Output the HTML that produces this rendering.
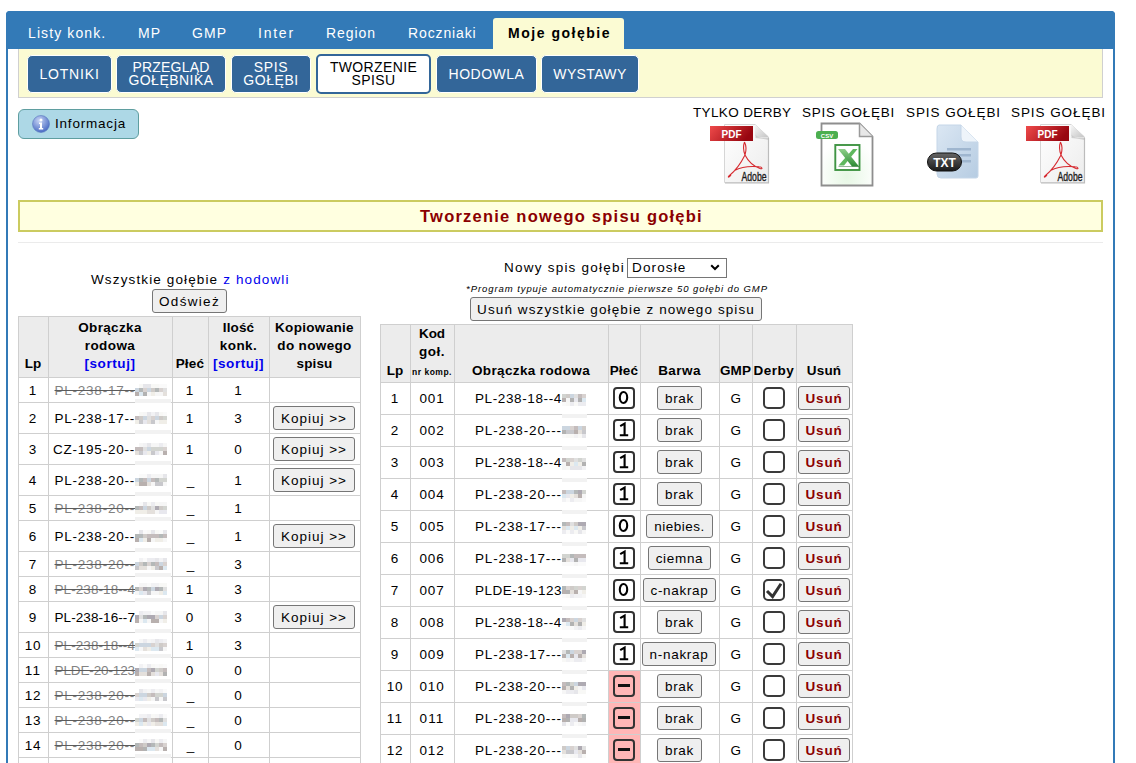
<!DOCTYPE html>
<html><head><meta charset="utf-8"><style>
*{box-sizing:border-box}
html,body{margin:0;padding:0}
body{width:1136px;height:763px;overflow:hidden;position:relative;background:#fff;font-family:"Liberation Sans",sans-serif;font-size:13px;color:#000}
.a{position:absolute}
.t{position:absolute;white-space:nowrap;line-height:16px}
.b{font-weight:bold}
#frame{position:absolute;left:6px;top:11px;width:1109px;height:800px;border:2px solid #337ab7;border-radius:4px 4px 0 0}
#hdr{position:absolute;left:6px;top:11px;width:1109px;height:38px;background:#337ab7;border-radius:4px 4px 0 0}
#acttab{position:absolute;left:493px;top:18px;width:131px;height:32px;background:#fbfbd3;border-radius:3px 3px 0 0}
#ybar{position:absolute;left:18px;top:49px;width:1085px;height:49px;background:#fbfbd3;border:1px solid #d0d0d0;border-top:0}
.nb{position:absolute;top:55px;height:38px;background:#336699;border:1px solid #fff;border-radius:5px}
.nb.act{top:54px;height:40px;background:#fff;border:2px solid #336699}
#info{position:absolute;left:18px;top:109px;width:121px;height:30px;background:#add8e6;border:1px solid #5f9ea0;border-radius:6px}
#title{position:absolute;left:18px;top:200px;width:1085px;height:32px;background:#ffffe0;border:2px solid #cbcb60}
#hr{position:absolute;left:18px;top:242px;width:1085px;height:1px;background:#ebebeb}
.hl{position:absolute;background:#cfcfcf}
.hbg{position:absolute;background:#ececec}
.btn{position:absolute;background:#efefef;border:1px solid #767676;border-radius:3px}
.lnk{color:#0000ee}
.strk{color:#828282;text-decoration:line-through;text-decoration-color:#5c5c5c}
.sq{position:absolute;border:2px solid #333;border-radius:5px}
.m{position:absolute;width:4px;height:4px}
</style></head><body>
<div id="frame"></div><div id="hdr"></div>
<div class="t " style="top: 24.65px; font-size: 14px; line-height: 17px; left: 28px; color: rgb(255, 255, 255); letter-spacing: 1.1px;">Listy konk.</div>
<div class="t " style="top: 24.65px; font-size: 14px; line-height: 17px; left: 138px; color: rgb(255, 255, 255); letter-spacing: 1.2px;">MP</div>
<div class="t " style="top: 24.65px; font-size: 14px; line-height: 17px; left: 192px; color: rgb(255, 255, 255); letter-spacing: 1.04px;">GMP</div>
<div class="t " style="top: 24.65px; font-size: 14px; line-height: 17px; left: 258px; color: rgb(255, 255, 255); letter-spacing: 1.76px;">Inter</div>
<div class="t " style="top: 24.65px; font-size: 14px; line-height: 17px; left: 326px; color: rgb(255, 255, 255); letter-spacing: 0.94px;">Region</div>
<div class="t " style="top: 24.65px; font-size: 14px; line-height: 17px; left: 408px; color: rgb(255, 255, 255); letter-spacing: 0.87px;">Roczniaki</div>
<div id="acttab"></div>
<div class="t b" style="top: 24.65px; font-size: 14px; line-height: 17px; left: 508px; letter-spacing: 1.52px;">Moje gołębie</div>
<div id="ybar"></div>
<div class="nb" style="left:27px;width:85px"></div>
<div class="t " style="top: 65.85px; font-size: 14px; line-height: 17px; left: 28px; width: 83px; text-align: center; color: rgb(255, 255, 255); letter-spacing: 0.82px;">LOTNIKI</div>
<div class="nb" style="left:116px;width:110px"></div>
<div class="t " style="top: 58.65px; font-size: 14px; line-height: 17px; left: 117px; width: 108px; text-align: center; color: rgb(255, 255, 255); letter-spacing: 0.19px;">PRZEGLĄD</div>
<div class="t " style="top: 72.45px; font-size: 14px; line-height: 17px; left: 117px; width: 108px; text-align: center; color: rgb(255, 255, 255); letter-spacing: 0.48px;">GOŁĘBNIKA</div>
<div class="nb" style="left:231px;width:80px"></div>
<div class="t " style="top: 58.65px; font-size: 14px; line-height: 17px; left: 232px; width: 78px; text-align: center; color: rgb(255, 255, 255); letter-spacing: 0.7px;">SPIS</div>
<div class="t " style="top: 72.45px; font-size: 14px; line-height: 17px; left: 232px; width: 78px; text-align: center; color: rgb(255, 255, 255); letter-spacing: 0.56px;">GOŁĘBI</div>
<div class="nb act" style="left:316px;width:115px"></div>
<div class="t " style="top: 58.65px; font-size: 14px; line-height: 17px; left: 316px; width: 115px; text-align: center; color: rgb(0, 0, 0); letter-spacing: 0.36px;">TWORZENIE</div>
<div class="t " style="top: 72.45px; font-size: 14px; line-height: 17px; left: 316px; width: 115px; text-align: center; color: rgb(0, 0, 0); letter-spacing: 0.44px;">SPISU</div>
<div class="nb" style="left:436px;width:101px"></div>
<div class="t " style="top: 65.85px; font-size: 14px; line-height: 17px; left: 437px; width: 99px; text-align: center; color: rgb(255, 255, 255); letter-spacing: 0.52px;">HODOWLA</div>
<div class="nb" style="left:541px;width:98px"></div>
<div class="t " style="top: 65.85px; font-size: 14px; line-height: 17px; left: 542px; width: 96px; text-align: center; color: rgb(255, 255, 255); letter-spacing: 0.36px;">WYSTAWY</div>
<div id="info"></div>
<svg class="a" style="left:32px;top:115px" width="18" height="18" viewBox="0 0 18 18"><defs><radialGradient id="ig" cx="40%" cy="30%" r="70%"><stop offset="0" stop-color="#c9d6f5"></stop><stop offset="1" stop-color="#4a6cc4"></stop></radialGradient></defs><circle cx="9" cy="9" r="8.5" fill="url(#ig)" stroke="#5a78c0" stroke-width="0.6"></circle><circle cx="9" cy="5" r="1.5" fill="#fff"></circle><path d="M7 7.5h3v5.5h1.2v1.5H6.8V13H8V9H7z" fill="#fff"></path></svg>
<div class="t " style="top: 116.32px; font-size: 13.5px; line-height: 16px; left: 55px; letter-spacing: 0.8px;">Informacja</div>
<div class="t " style="top: 104.92px; font-size: 13.5px; line-height: 16px; left: 693px; letter-spacing: 0.36px;">TYLKO DERBY</div>
<div class="t " style="top: 104.92px; font-size: 13.5px; line-height: 16px; left: 802px; letter-spacing: 0.75px;">SPIS GOŁĘBI</div>
<div class="t " style="top: 104.92px; font-size: 13.5px; line-height: 16px; left: 906px; letter-spacing: 0.93px;">SPIS GOŁĘBI</div>
<div class="t " style="top: 104.92px; font-size: 13.5px; line-height: 16px; left: 1011px; letter-spacing: 0.93px;">SPIS GOŁĘBI</div>
<svg class="a" style="left:710px;top:122px" width="64" height="64" viewBox="0 0 64 64"><defs><linearGradient id="pg" x1="0" y1="0" x2="1" y2="1"><stop offset="0" stop-color="#ffffff"></stop><stop offset="1" stop-color="#ececec"></stop></linearGradient><linearGradient id="fg" x1="0" y1="0" x2="1" y2="1"><stop offset="0" stop-color="#f8f8f8"></stop><stop offset="1" stop-color="#c4c4c4"></stop></linearGradient><linearGradient id="rb" x1="0" y1="0" x2="1" y2="0.3"><stop offset="0" stop-color="#ef4a4a"></stop><stop offset="1" stop-color="#980610"></stop></linearGradient></defs><path d="M14.5 2.5H45L58.5 15V60.5H14.5z" fill="url(#pg)" stroke="#d6d6d6" stroke-width="1"></path><path d="M58.5 16V61H15" fill="none" stroke="#bcbcbc" stroke-width="1.2"></path><path d="M45 2.5V12Q45 15 48 15H58.5z" fill="url(#fg)"></path><path d="M45.5 12.5Q47 15.5 52 15.5H58.5V18Q52 16.5 45.5 16z" fill="#b8b8b8" opacity="0.6"></path><rect x="0" y="4" width="43" height="15" fill="url(#rb)"></rect><text x="11.5" y="16" font-family="Liberation Sans" font-weight="bold" font-size="11.5" fill="#fff" textLength="20" lengthAdjust="spacingAndGlyphs">PDF</text><path d="M34.5 20C33 24 33.5 29 35 33C31 41 25 49 19.5 53.5C17 55.5 19 56 21 53M34.5 20C36 23 36.5 28 35 33C38 39 43 44 50 46.5C53 47.5 52.5 45 49 44.8C41 44 31 45 24.5 48.5" fill="none" stroke="#d62a30" stroke-width="1.1"></path><text x="31.5" y="58.5" font-family="Liberation Sans" font-size="12.5" fill="#1a1a1a" stroke="#1a1a1a" stroke-width="0.35" textLength="25" lengthAdjust="spacingAndGlyphs">Adobe</text></svg>
<svg class="a" style="left:1026px;top:122px" width="64" height="64" viewBox="0 0 64 64"><defs><linearGradient id="pg" x1="0" y1="0" x2="1" y2="1"><stop offset="0" stop-color="#ffffff"></stop><stop offset="1" stop-color="#ececec"></stop></linearGradient><linearGradient id="fg" x1="0" y1="0" x2="1" y2="1"><stop offset="0" stop-color="#f8f8f8"></stop><stop offset="1" stop-color="#c4c4c4"></stop></linearGradient><linearGradient id="rb" x1="0" y1="0" x2="1" y2="0.3"><stop offset="0" stop-color="#ef4a4a"></stop><stop offset="1" stop-color="#980610"></stop></linearGradient></defs><path d="M14.5 2.5H45L58.5 15V60.5H14.5z" fill="url(#pg)" stroke="#d6d6d6" stroke-width="1"></path><path d="M58.5 16V61H15" fill="none" stroke="#bcbcbc" stroke-width="1.2"></path><path d="M45 2.5V12Q45 15 48 15H58.5z" fill="url(#fg)"></path><path d="M45.5 12.5Q47 15.5 52 15.5H58.5V18Q52 16.5 45.5 16z" fill="#b8b8b8" opacity="0.6"></path><rect x="0" y="4" width="43" height="15" fill="url(#rb)"></rect><text x="11.5" y="16" font-family="Liberation Sans" font-weight="bold" font-size="11.5" fill="#fff" textLength="20" lengthAdjust="spacingAndGlyphs">PDF</text><path d="M34.5 20C33 24 33.5 29 35 33C31 41 25 49 19.5 53.5C17 55.5 19 56 21 53M34.5 20C36 23 36.5 28 35 33C38 39 43 44 50 46.5C53 47.5 52.5 45 49 44.8C41 44 31 45 24.5 48.5" fill="none" stroke="#d62a30" stroke-width="1.1"></path><text x="31.5" y="58.5" font-family="Liberation Sans" font-size="12.5" fill="#1a1a1a" stroke="#1a1a1a" stroke-width="0.35" textLength="25" lengthAdjust="spacingAndGlyphs">Adobe</text></svg>
<svg class="a" style="left:815px;top:122px" width="60" height="66" viewBox="0 0 60 66"><defs><radialGradient id="cg" cx="50%" cy="85%" r="60%"><stop offset="0" stop-color="#e6f7e4"></stop><stop offset="1" stop-color="#ffffff"></stop></radialGradient><linearGradient id="xg" x1="0" y1="0" x2="0" y2="1"><stop offset="0" stop-color="#8fd08a"></stop><stop offset="1" stop-color="#2d8a34"></stop></linearGradient></defs><path d="M6.5 1.5h38l13 13v49h-51z" fill="url(#cg)" stroke="#8e8e8e" stroke-width="1.8"></path><path d="M44.5 1.5v13h13" fill="#e8e8e8" stroke="#9a9a9a" stroke-width="1.5"></path><rect x="1" y="9" width="22" height="8" rx="2.5" fill="#4caf50"></rect><text x="12" y="15.5" font-family="Liberation Sans" font-weight="bold" font-size="6" fill="#fff" text-anchor="middle">CSV</text><rect x="20.3" y="23" width="24.2" height="25" fill="#ffffff" stroke="#3f9443" stroke-width="1.9"></rect><path d="M38 27H42.5L29 43.5H23.5z" fill="#5fb85e"></path><path d="M23 27H30L44 44.5H37z" fill="url(#xg)"></path><path d="M23.5 44.5H44" stroke="#2f6f34" stroke-width="1" opacity="0.5"></path></svg>
<svg class="a" style="left:926px;top:123px" width="56" height="58" viewBox="0 0 56 58"><defs><linearGradient id="tg" x1="0" y1="0" x2="1" y2="1"><stop offset="0" stop-color="#dbe7f3"></stop><stop offset="1" stop-color="#b6cce2"></stop></linearGradient><linearGradient id="pill" x1="0" y1="0" x2="0" y2="1"><stop offset="0" stop-color="#666"></stop><stop offset="1" stop-color="#1a1a1a"></stop></linearGradient></defs><path d="M13 2h22l17 17v34q0 2 -2 2h-35q-4 0 -4 -4v-45q0 -4 2 -4z" fill="url(#tg)" stroke="#c5d6e8" stroke-width="1"></path><path d="M35 2v12q0 5 5 5h12" fill="#eef4fa" stroke="#c5d6e8" stroke-width="1"></path><rect x="21" y="25" width="24" height="2.5" fill="#9fb6cf"></rect><rect x="21" y="31" width="24" height="2.5" fill="#9fb6cf"></rect><rect x="21" y="37" width="24" height="2.5" fill="#9fb6cf"></rect><rect x="1.5" y="30" width="34" height="18" rx="9" fill="url(#pill)" stroke="#111" stroke-width="1"></rect><text x="18.5" y="44" font-family="Liberation Sans" font-weight="bold" font-size="12" fill="#fff" text-anchor="middle">TXT</text></svg>
<div id="title"></div>
<div class="t b" style="top: 205.98px; font-size: 16.5px; line-height: 20px; left: 420px; color: rgb(139, 0, 0); letter-spacing: 1.23px;">Tworzenie nowego spisu gołębi</div>
<div id="hr"></div>
<div class="t " style="top: 272.12px; font-size: 13.5px; line-height: 16px; left: 91px; letter-spacing: 1.13px;">Wszystkie gołębie <span class="lnk">z hodowli</span></div>
<div class="btn" style="left:152px;top:289px;width:75px;height:24px"></div>
<div class="t " style="top: 293.82px; font-size: 13.5px; line-height: 16px; left: 152px; width: 75px; text-align: center; letter-spacing: 1.32px;">Odśwież</div>
<div class="hbg" style="left:18px;top:316px;width:342px;height:61px"></div>
<div class="hl" style="left:18px;top:316px;width:1px;height:466px"></div>
<div class="hl" style="left:48px;top:316px;width:1px;height:466px"></div>
<div class="hl" style="left:172px;top:316px;width:1px;height:466px"></div>
<div class="hl" style="left:208px;top:316px;width:1px;height:466px"></div>
<div class="hl" style="left:269px;top:316px;width:1px;height:466px"></div>
<div class="hl" style="left:360px;top:316px;width:1px;height:466px"></div>
<div class="hl" style="left:18px;top:316px;width:343px;height:1px"></div>
<div class="hl" style="left:18px;top:377px;width:343px;height:1px"></div>
<div class="hl" style="left:18px;top:402px;width:343px;height:1px"></div>
<div class="hl" style="left:18px;top:433px;width:343px;height:1px"></div>
<div class="hl" style="left:18px;top:464px;width:343px;height:1px"></div>
<div class="hl" style="left:18px;top:495px;width:343px;height:1px"></div>
<div class="hl" style="left:18px;top:520px;width:343px;height:1px"></div>
<div class="hl" style="left:18px;top:551px;width:343px;height:1px"></div>
<div class="hl" style="left:18px;top:576px;width:343px;height:1px"></div>
<div class="hl" style="left:18px;top:601px;width:343px;height:1px"></div>
<div class="hl" style="left:18px;top:632px;width:343px;height:1px"></div>
<div class="hl" style="left:18px;top:657px;width:343px;height:1px"></div>
<div class="hl" style="left:18px;top:682px;width:343px;height:1px"></div>
<div class="hl" style="left:18px;top:707px;width:343px;height:1px"></div>
<div class="hl" style="left:18px;top:732px;width:343px;height:1px"></div>
<div class="hl" style="left:18px;top:757px;width:343px;height:1px"></div>
<div class="hl" style="left:18px;top:782px;width:343px;height:1px"></div>
<div class="t b" style="top: 356.32px; font-size: 13.5px; line-height: 16px; left: 18px; width: 30px; text-align: center; letter-spacing: -0.06px;">Lp</div>
<div class="t b" style="top: 320.32px; font-size: 13.5px; line-height: 16px; left: 48px; width: 124px; text-align: center; letter-spacing: 0.34px;">Obrączka</div>
<div class="t b" style="top: 338.32px; font-size: 13.5px; line-height: 16px; left: 48px; width: 124px; text-align: center; letter-spacing: 0.43px;">rodowa</div>
<div class="t b" style="top: 356.32px; font-size: 13.5px; line-height: 16px; left: 48px; width: 124px; text-align: center; letter-spacing: 0.57px;"><span class="lnk">[sortuj]</span></div>
<div class="t b" style="top: 356.32px; font-size: 13.5px; line-height: 16px; left: 172px; width: 36px; text-align: center; letter-spacing: 0.24px;">Płeć</div>
<div class="t b" style="top: 320.32px; font-size: 13.5px; line-height: 16px; left: 208px; width: 61px; text-align: center; letter-spacing: 0.11px;">Ilość</div>
<div class="t b" style="top: 338.32px; font-size: 13.5px; line-height: 16px; left: 208px; width: 61px; text-align: center; letter-spacing: 0.4px;">konk.</div>
<div class="t b" style="top: 356.32px; font-size: 13.5px; line-height: 16px; left: 208px; width: 61px; text-align: center; letter-spacing: 0.57px;"><span class="lnk">[sortuj]</span></div>
<div class="t b" style="top: 320.32px; font-size: 13.5px; line-height: 16px; left: 269px; width: 91px; text-align: center; letter-spacing: 0.31px;">Kopiowanie</div>
<div class="t b" style="top: 338.32px; font-size: 13.5px; line-height: 16px; left: 269px; width: 91px; text-align: center; letter-spacing: 0.35px;">do nowego</div>
<div class="t b" style="top: 356.32px; font-size: 13.5px; line-height: 16px; left: 269px; width: 91px; text-align: center; letter-spacing: 0.11px;">spisu</div>
<div class="t " style="top: 383.32px; font-size: 13.5px; line-height: 16px; left: 18px; width: 30px; text-align: center; letter-spacing: 0.77px;">1</div>
<div class="t strk" style="top: 383.32px; font-size: 13.5px; line-height: 16px; left: 54.5px; letter-spacing: 0.77px;">PL-238-17--</div>
<div class="m" style="left:139px;top:384px;background:#f8f8f6"></div><div class="m" style="left:143px;top:384px;background:#e6e6ea"></div><div class="m" style="left:147px;top:384px;background:#e6e6ea"></div><div class="m" style="left:151px;top:384px;background:#f8f8f6"></div><div class="m" style="left:155px;top:384px;background:#f8f8f6"></div><div class="m" style="left:159px;top:384px;background:#fafafa"></div><div class="m" style="left:163px;top:384px;background:#fafafa"></div><div class="m" style="left:135px;top:388px;background:#ccd6e0"></div><div class="m" style="left:139px;top:388px;background:#b4b8b8"></div><div class="m" style="left:143px;top:388px;background:#d8d2d0"></div><div class="m" style="left:147px;top:388px;background:#ccd6e0"></div><div class="m" style="left:151px;top:388px;background:#cfcbc8"></div><div class="m" style="left:155px;top:388px;background:#b4b8b8"></div><div class="m" style="left:159px;top:388px;background:#d8d2d0"></div><div class="m" style="left:163px;top:388px;background:#e0e0e0"></div><div class="m" style="left:135px;top:392px;background:#b8b0ae"></div><div class="m" style="left:139px;top:392px;background:#dce8f0"></div><div class="m" style="left:143px;top:392px;background:#b2b2b2"></div><div class="m" style="left:147px;top:392px;background:#f6f6f6"></div><div class="m" style="left:151px;top:392px;background:#f0eee8"></div><div class="m" style="left:155px;top:392px;background:#f6f6f6"></div><div class="m" style="left:159px;top:392px;background:#f6f6f6"></div><div class="m" style="left:163px;top:392px;background:#e4e0dc"></div><div class="a" style="left:135px;top:399px;width:36px;height:4px;background:#f2f2f2"></div>
<div class="t " style="top: 383.32px; font-size: 13.5px; line-height: 16px; left: 172px; width: 36px; text-align: center; letter-spacing: 0.77px;">1</div>
<div class="t " style="top: 383.32px; font-size: 13.5px; line-height: 16px; left: 208px; width: 61px; text-align: center; letter-spacing: 0.77px;">1</div>
<div class="t " style="top: 411.32px; font-size: 13.5px; line-height: 16px; left: 18px; width: 30px; text-align: center; letter-spacing: 0.77px;">2</div>
<div class="t " style="top: 411.32px; font-size: 13.5px; line-height: 16px; left: 54.5px; letter-spacing: 0.77px;">PL-238-17--</div>
<div class="m" style="left:139px;top:412px;background:#f8f8f6"></div><div class="m" style="left:143px;top:412px;background:#f6f6f6"></div><div class="m" style="left:147px;top:412px;background:#e6e6ea"></div><div class="m" style="left:151px;top:412px;background:#f2f2f4"></div><div class="m" style="left:155px;top:412px;background:#e6e6ea"></div><div class="m" style="left:159px;top:412px;background:#f8f8f6"></div><div class="m" style="left:163px;top:412px;background:#fafafa"></div><div class="m" style="left:135px;top:416px;background:#c4bcbc"></div><div class="m" style="left:139px;top:416px;background:#cfcbc8"></div><div class="m" style="left:143px;top:416px;background:#ccd6e0"></div><div class="m" style="left:147px;top:416px;background:#e0e0e0"></div><div class="m" style="left:151px;top:416px;background:#d8d2d0"></div><div class="m" style="left:155px;top:416px;background:#ccd6e0"></div><div class="m" style="left:159px;top:416px;background:#cfcbc8"></div><div class="m" style="left:163px;top:416px;background:#d2d4d0"></div><div class="m" style="left:135px;top:420px;background:#f0eee8"></div><div class="m" style="left:139px;top:420px;background:#c8c8cc"></div><div class="m" style="left:143px;top:420px;background:#e8e8ee"></div><div class="m" style="left:147px;top:420px;background:#e4e0dc"></div><div class="m" style="left:151px;top:420px;background:#c8c8cc"></div><div class="m" style="left:155px;top:420px;background:#f6f6f6"></div><div class="m" style="left:159px;top:420px;background:#f0eee8"></div><div class="m" style="left:163px;top:420px;background:#f0eee8"></div><div class="a" style="left:135px;top:430px;width:36px;height:4px;background:#f2f2f2"></div>
<div class="t " style="top: 411.32px; font-size: 13.5px; line-height: 16px; left: 172px; width: 36px; text-align: center; letter-spacing: 0.77px;">1</div>
<div class="t " style="top: 411.32px; font-size: 13.5px; line-height: 16px; left: 208px; width: 61px; text-align: center; letter-spacing: 0.77px;">3</div>
<div class="btn" style="left:273px;top:406px;width:82px;height:24px"></div>
<div class="t " style="top: 411.32px; font-size: 13.5px; line-height: 16px; left: 273px; width: 82px; text-align: center; letter-spacing: 0.98px;">Kopiuj &gt;&gt;</div>
<div class="t " style="top: 442.32px; font-size: 13.5px; line-height: 16px; left: 18px; width: 30px; text-align: center; letter-spacing: 0.77px;">3</div>
<div class="t " style="top: 442.32px; font-size: 13.5px; line-height: 16px; left: 53px; letter-spacing: 0.77px;">CZ-195-20--</div>
<div class="m" style="left:139px;top:443px;background:#f6f6f6"></div><div class="m" style="left:143px;top:443px;background:#f2f2f4"></div><div class="m" style="left:147px;top:443px;background:#e6e6ea"></div><div class="m" style="left:151px;top:443px;background:#f6f6f6"></div><div class="m" style="left:155px;top:443px;background:#f6f6f6"></div><div class="m" style="left:159px;top:443px;background:#ececf0"></div><div class="m" style="left:163px;top:443px;background:#f6f6f6"></div><div class="m" style="left:135px;top:447px;background:#c4bcbc"></div><div class="m" style="left:139px;top:447px;background:#c4bcbc"></div><div class="m" style="left:143px;top:447px;background:#e0e0e0"></div><div class="m" style="left:147px;top:447px;background:#ccd6e0"></div><div class="m" style="left:151px;top:447px;background:#d2d4d0"></div><div class="m" style="left:155px;top:447px;background:#d2d4d0"></div><div class="m" style="left:159px;top:447px;background:#d2d4d0"></div><div class="m" style="left:163px;top:447px;background:#d8d2d0"></div><div class="m" style="left:135px;top:451px;background:#e4e0dc"></div><div class="m" style="left:139px;top:451px;background:#c8c8cc"></div><div class="m" style="left:143px;top:451px;background:#e8e8ee"></div><div class="m" style="left:147px;top:451px;background:#f0eee8"></div><div class="m" style="left:151px;top:451px;background:#c8c8cc"></div><div class="m" style="left:155px;top:451px;background:#e8e8ee"></div><div class="m" style="left:159px;top:451px;background:#f6f6f6"></div><div class="m" style="left:163px;top:451px;background:#b8b0ae"></div><div class="a" style="left:135px;top:461px;width:36px;height:4px;background:#f2f2f2"></div>
<div class="t " style="top: 442.32px; font-size: 13.5px; line-height: 16px; left: 172px; width: 36px; text-align: center; letter-spacing: 0.77px;">1</div>
<div class="t " style="top: 442.32px; font-size: 13.5px; line-height: 16px; left: 208px; width: 61px; text-align: center; letter-spacing: 0.77px;">0</div>
<div class="btn" style="left:273px;top:437px;width:82px;height:24px"></div>
<div class="t " style="top: 442.32px; font-size: 13.5px; line-height: 16px; left: 273px; width: 82px; text-align: center; letter-spacing: 0.98px;">Kopiuj &gt;&gt;</div>
<div class="t " style="top: 473.32px; font-size: 13.5px; line-height: 16px; left: 18px; width: 30px; text-align: center; letter-spacing: 0.77px;">4</div>
<div class="t " style="top: 473.32px; font-size: 13.5px; line-height: 16px; left: 54.5px; letter-spacing: 0.77px;">PL-238-20--</div>
<div class="m" style="left:139px;top:474px;background:#fafafa"></div><div class="m" style="left:143px;top:474px;background:#fafafa"></div><div class="m" style="left:147px;top:474px;background:#ececf0"></div><div class="m" style="left:151px;top:474px;background:#f6f6f6"></div><div class="m" style="left:155px;top:474px;background:#f6f6f6"></div><div class="m" style="left:159px;top:474px;background:#f6f6f6"></div><div class="m" style="left:163px;top:474px;background:#e6e6ea"></div><div class="m" style="left:135px;top:478px;background:#ccd6e0"></div><div class="m" style="left:139px;top:478px;background:#b4b8b8"></div><div class="m" style="left:143px;top:478px;background:#c4bcbc"></div><div class="m" style="left:147px;top:478px;background:#ccd6e0"></div><div class="m" style="left:151px;top:478px;background:#c4bcbc"></div><div class="m" style="left:155px;top:478px;background:#b4b8b8"></div><div class="m" style="left:159px;top:478px;background:#d2d4d0"></div><div class="m" style="left:163px;top:478px;background:#d2d4d0"></div><div class="m" style="left:135px;top:482px;background:#f0eee8"></div><div class="m" style="left:139px;top:482px;background:#b8b0ae"></div><div class="m" style="left:143px;top:482px;background:#b8b0ae"></div><div class="m" style="left:147px;top:482px;background:#e4e0dc"></div><div class="m" style="left:151px;top:482px;background:#f6f6f6"></div><div class="m" style="left:155px;top:482px;background:#c8c8cc"></div><div class="m" style="left:159px;top:482px;background:#c8c8cc"></div><div class="m" style="left:163px;top:482px;background:#f6f6f6"></div><div class="a" style="left:135px;top:492px;width:36px;height:4px;background:#f2f2f2"></div>
<div class="t " style="top: 473.32px; font-size: 13.5px; line-height: 16px; left: 172px; width: 36px; text-align: center; letter-spacing: -1.02px;">_</div>
<div class="t " style="top: 473.32px; font-size: 13.5px; line-height: 16px; left: 208px; width: 61px; text-align: center; letter-spacing: 0.77px;">1</div>
<div class="btn" style="left:273px;top:468px;width:82px;height:24px"></div>
<div class="t " style="top: 473.32px; font-size: 13.5px; line-height: 16px; left: 273px; width: 82px; text-align: center; letter-spacing: 0.98px;">Kopiuj &gt;&gt;</div>
<div class="t " style="top: 501.32px; font-size: 13.5px; line-height: 16px; left: 18px; width: 30px; text-align: center; letter-spacing: 0.77px;">5</div>
<div class="t strk" style="top: 501.32px; font-size: 13.5px; line-height: 16px; left: 54.5px; letter-spacing: 0.77px;">PL-238-20--</div>
<div class="m" style="left:139px;top:502px;background:#fafafa"></div><div class="m" style="left:143px;top:502px;background:#e6e6ea"></div><div class="m" style="left:147px;top:502px;background:#f8f8f6"></div><div class="m" style="left:151px;top:502px;background:#ececf0"></div><div class="m" style="left:155px;top:502px;background:#f8f8f6"></div><div class="m" style="left:159px;top:502px;background:#f6f6f6"></div><div class="m" style="left:163px;top:502px;background:#f6f6f6"></div><div class="m" style="left:135px;top:506px;background:#b4b8b8"></div><div class="m" style="left:139px;top:506px;background:#c4bcbc"></div><div class="m" style="left:143px;top:506px;background:#ccd6e0"></div><div class="m" style="left:147px;top:506px;background:#cfcbc8"></div><div class="m" style="left:151px;top:506px;background:#e0e0e0"></div><div class="m" style="left:155px;top:506px;background:#aeaab2"></div><div class="m" style="left:159px;top:506px;background:#cfcbc8"></div><div class="m" style="left:163px;top:506px;background:#d2d4d0"></div><div class="m" style="left:135px;top:510px;background:#f0eee8"></div><div class="m" style="left:139px;top:510px;background:#f0eee8"></div><div class="m" style="left:143px;top:510px;background:#f0eee8"></div><div class="m" style="left:147px;top:510px;background:#e4e0dc"></div><div class="m" style="left:151px;top:510px;background:#e4e0dc"></div><div class="m" style="left:155px;top:510px;background:#f6f6f6"></div><div class="m" style="left:159px;top:510px;background:#e8e8ee"></div><div class="m" style="left:163px;top:510px;background:#e8e8ee"></div><div class="a" style="left:135px;top:517px;width:36px;height:4px;background:#f2f2f2"></div>
<div class="t " style="top: 501.32px; font-size: 13.5px; line-height: 16px; left: 172px; width: 36px; text-align: center; letter-spacing: -1.02px;">_</div>
<div class="t " style="top: 501.32px; font-size: 13.5px; line-height: 16px; left: 208px; width: 61px; text-align: center; letter-spacing: 0.77px;">1</div>
<div class="t " style="top: 529.32px; font-size: 13.5px; line-height: 16px; left: 18px; width: 30px; text-align: center; letter-spacing: 0.77px;">6</div>
<div class="t " style="top: 529.32px; font-size: 13.5px; line-height: 16px; left: 54.5px; letter-spacing: 0.77px;">PL-238-20--</div>
<div class="m" style="left:139px;top:530px;background:#e6e6ea"></div><div class="m" style="left:143px;top:530px;background:#fafafa"></div><div class="m" style="left:147px;top:530px;background:#f8f8f6"></div><div class="m" style="left:151px;top:530px;background:#e6e6ea"></div><div class="m" style="left:155px;top:530px;background:#f8f8f6"></div><div class="m" style="left:159px;top:530px;background:#fafafa"></div><div class="m" style="left:163px;top:530px;background:#e6e6ea"></div><div class="m" style="left:135px;top:534px;background:#b4b8b8"></div><div class="m" style="left:139px;top:534px;background:#b4b8b8"></div><div class="m" style="left:143px;top:534px;background:#cfcbc8"></div><div class="m" style="left:147px;top:534px;background:#c4bcbc"></div><div class="m" style="left:151px;top:534px;background:#c4bcbc"></div><div class="m" style="left:155px;top:534px;background:#c4bcbc"></div><div class="m" style="left:159px;top:534px;background:#b4b8b8"></div><div class="m" style="left:163px;top:534px;background:#c4bcbc"></div><div class="m" style="left:135px;top:538px;background:#b8b0ae"></div><div class="m" style="left:139px;top:538px;background:#dce8f0"></div><div class="m" style="left:143px;top:538px;background:#f0eee8"></div><div class="m" style="left:147px;top:538px;background:#b8b0ae"></div><div class="m" style="left:151px;top:538px;background:#f6f6f6"></div><div class="m" style="left:155px;top:538px;background:#f0eee8"></div><div class="m" style="left:159px;top:538px;background:#f0eee8"></div><div class="m" style="left:163px;top:538px;background:#f6f6f6"></div><div class="a" style="left:135px;top:548px;width:36px;height:4px;background:#f2f2f2"></div>
<div class="t " style="top: 529.32px; font-size: 13.5px; line-height: 16px; left: 172px; width: 36px; text-align: center; letter-spacing: -1.02px;">_</div>
<div class="t " style="top: 529.32px; font-size: 13.5px; line-height: 16px; left: 208px; width: 61px; text-align: center; letter-spacing: 0.77px;">1</div>
<div class="btn" style="left:273px;top:524px;width:82px;height:24px"></div>
<div class="t " style="top: 529.32px; font-size: 13.5px; line-height: 16px; left: 273px; width: 82px; text-align: center; letter-spacing: 0.98px;">Kopiuj &gt;&gt;</div>
<div class="t " style="top: 557.32px; font-size: 13.5px; line-height: 16px; left: 18px; width: 30px; text-align: center; letter-spacing: 0.77px;">7</div>
<div class="t strk" style="top: 557.32px; font-size: 13.5px; line-height: 16px; left: 54.5px; letter-spacing: 0.77px;">PL-238-20--</div>
<div class="m" style="left:139px;top:558px;background:#f2f2f4"></div><div class="m" style="left:143px;top:558px;background:#fafafa"></div><div class="m" style="left:147px;top:558px;background:#ececf0"></div><div class="m" style="left:151px;top:558px;background:#ececf0"></div><div class="m" style="left:155px;top:558px;background:#e6e6ea"></div><div class="m" style="left:159px;top:558px;background:#f2f2f4"></div><div class="m" style="left:163px;top:558px;background:#e6e6ea"></div><div class="m" style="left:135px;top:562px;background:#ccd6e0"></div><div class="m" style="left:139px;top:562px;background:#cfcbc8"></div><div class="m" style="left:143px;top:562px;background:#b4b8b8"></div><div class="m" style="left:147px;top:562px;background:#d8d2d0"></div><div class="m" style="left:151px;top:562px;background:#b4b8b8"></div><div class="m" style="left:155px;top:562px;background:#c4bcbc"></div><div class="m" style="left:159px;top:562px;background:#ccd6e0"></div><div class="m" style="left:163px;top:562px;background:#d8d2d0"></div><div class="m" style="left:135px;top:566px;background:#c8c8cc"></div><div class="m" style="left:139px;top:566px;background:#e4e0dc"></div><div class="m" style="left:143px;top:566px;background:#e4e0dc"></div><div class="m" style="left:147px;top:566px;background:#f6f6f6"></div><div class="m" style="left:151px;top:566px;background:#f0eee8"></div><div class="m" style="left:155px;top:566px;background:#c8c8cc"></div><div class="m" style="left:159px;top:566px;background:#b8b0ae"></div><div class="m" style="left:163px;top:566px;background:#dce8f0"></div><div class="a" style="left:135px;top:573px;width:36px;height:4px;background:#f2f2f2"></div>
<div class="t " style="top: 557.32px; font-size: 13.5px; line-height: 16px; left: 172px; width: 36px; text-align: center; letter-spacing: -1.02px;">_</div>
<div class="t " style="top: 557.32px; font-size: 13.5px; line-height: 16px; left: 208px; width: 61px; text-align: center; letter-spacing: 0.77px;">3</div>
<div class="t " style="top: 582.32px; font-size: 13.5px; line-height: 16px; left: 18px; width: 30px; text-align: center; letter-spacing: 0.77px;">8</div>
<div class="t strk" style="top: 582.32px; font-size: 13.5px; line-height: 16px; left: 54.5px; letter-spacing: 0.08px;">PL-238-18--4</div>
<div class="m" style="left:139px;top:583px;background:#f6f6f6"></div><div class="m" style="left:143px;top:583px;background:#f6f6f6"></div><div class="m" style="left:147px;top:583px;background:#fafafa"></div><div class="m" style="left:151px;top:583px;background:#f2f2f4"></div><div class="m" style="left:155px;top:583px;background:#f2f2f4"></div><div class="m" style="left:159px;top:583px;background:#f8f8f6"></div><div class="m" style="left:163px;top:583px;background:#f8f8f6"></div><div class="m" style="left:135px;top:587px;background:#b4b8b8"></div><div class="m" style="left:139px;top:587px;background:#d8d2d0"></div><div class="m" style="left:143px;top:587px;background:#aeaab2"></div><div class="m" style="left:147px;top:587px;background:#b4b8b8"></div><div class="m" style="left:151px;top:587px;background:#ccd6e0"></div><div class="m" style="left:155px;top:587px;background:#aeaab2"></div><div class="m" style="left:159px;top:587px;background:#b4b8b8"></div><div class="m" style="left:163px;top:587px;background:#e0e0e0"></div><div class="m" style="left:135px;top:591px;background:#f6f6f6"></div><div class="m" style="left:139px;top:591px;background:#dce8f0"></div><div class="m" style="left:143px;top:591px;background:#e8e8ee"></div><div class="m" style="left:147px;top:591px;background:#c8c8cc"></div><div class="m" style="left:151px;top:591px;background:#f6f6f6"></div><div class="m" style="left:155px;top:591px;background:#f6f6f6"></div><div class="m" style="left:159px;top:591px;background:#f0eee8"></div><div class="m" style="left:163px;top:591px;background:#dce8f0"></div><div class="a" style="left:135px;top:598px;width:36px;height:4px;background:#f2f2f2"></div>
<div class="t " style="top: 582.32px; font-size: 13.5px; line-height: 16px; left: 172px; width: 36px; text-align: center; letter-spacing: 0.77px;">1</div>
<div class="t " style="top: 582.32px; font-size: 13.5px; line-height: 16px; left: 208px; width: 61px; text-align: center; letter-spacing: 0.77px;">3</div>
<div class="t " style="top: 610.32px; font-size: 13.5px; line-height: 16px; left: 18px; width: 30px; text-align: center; letter-spacing: 0.77px;">9</div>
<div class="t " style="top: 610.32px; font-size: 13.5px; line-height: 16px; left: 54.5px; letter-spacing: 0.08px;">PL-238-16--7</div>
<div class="m" style="left:139px;top:611px;background:#ececf0"></div><div class="m" style="left:143px;top:611px;background:#f2f2f4"></div><div class="m" style="left:147px;top:611px;background:#f2f2f4"></div><div class="m" style="left:151px;top:611px;background:#fafafa"></div><div class="m" style="left:155px;top:611px;background:#f6f6f6"></div><div class="m" style="left:159px;top:611px;background:#f6f6f6"></div><div class="m" style="left:163px;top:611px;background:#e6e6ea"></div><div class="m" style="left:135px;top:615px;background:#aeaab2"></div><div class="m" style="left:139px;top:615px;background:#e0e0e0"></div><div class="m" style="left:143px;top:615px;background:#b4b8b8"></div><div class="m" style="left:147px;top:615px;background:#aeaab2"></div><div class="m" style="left:151px;top:615px;background:#aeaab2"></div><div class="m" style="left:155px;top:615px;background:#d8d2d0"></div><div class="m" style="left:159px;top:615px;background:#ccd6e0"></div><div class="m" style="left:163px;top:615px;background:#d8d2d0"></div><div class="m" style="left:135px;top:619px;background:#b8b0ae"></div><div class="m" style="left:139px;top:619px;background:#f6f6f6"></div><div class="m" style="left:143px;top:619px;background:#dce8f0"></div><div class="m" style="left:147px;top:619px;background:#f6f6f6"></div><div class="m" style="left:151px;top:619px;background:#b8b0ae"></div><div class="m" style="left:155px;top:619px;background:#b8b0ae"></div><div class="m" style="left:159px;top:619px;background:#f6f6f6"></div><div class="m" style="left:163px;top:619px;background:#f0eee8"></div><div class="a" style="left:135px;top:629px;width:36px;height:4px;background:#f2f2f2"></div>
<div class="t " style="top: 610.32px; font-size: 13.5px; line-height: 16px; left: 172px; width: 36px; text-align: center; letter-spacing: 0.77px;">0</div>
<div class="t " style="top: 610.32px; font-size: 13.5px; line-height: 16px; left: 208px; width: 61px; text-align: center; letter-spacing: 0.77px;">3</div>
<div class="btn" style="left:273px;top:605px;width:82px;height:24px"></div>
<div class="t " style="top: 610.32px; font-size: 13.5px; line-height: 16px; left: 273px; width: 82px; text-align: center; letter-spacing: 0.98px;">Kopiuj &gt;&gt;</div>
<div class="t " style="top: 638.32px; font-size: 13.5px; line-height: 16px; left: 18px; width: 30px; text-align: center; letter-spacing: 0.76px;">10</div>
<div class="t strk" style="top: 638.32px; font-size: 13.5px; line-height: 16px; left: 54.5px; letter-spacing: 0.08px;">PL-238-18--4</div>
<div class="m" style="left:139px;top:639px;background:#f6f6f6"></div><div class="m" style="left:143px;top:639px;background:#ececf0"></div><div class="m" style="left:147px;top:639px;background:#f6f6f6"></div><div class="m" style="left:151px;top:639px;background:#f2f2f4"></div><div class="m" style="left:155px;top:639px;background:#e6e6ea"></div><div class="m" style="left:159px;top:639px;background:#ececf0"></div><div class="m" style="left:163px;top:639px;background:#f2f2f4"></div><div class="m" style="left:135px;top:643px;background:#d2d4d0"></div><div class="m" style="left:139px;top:643px;background:#ccd6e0"></div><div class="m" style="left:143px;top:643px;background:#ccd6e0"></div><div class="m" style="left:147px;top:643px;background:#ccd6e0"></div><div class="m" style="left:151px;top:643px;background:#d8d2d0"></div><div class="m" style="left:155px;top:643px;background:#e0e0e0"></div><div class="m" style="left:159px;top:643px;background:#cfcbc8"></div><div class="m" style="left:163px;top:643px;background:#d8d2d0"></div><div class="m" style="left:135px;top:647px;background:#dce8f0"></div><div class="m" style="left:139px;top:647px;background:#f6f6f6"></div><div class="m" style="left:143px;top:647px;background:#e4e0dc"></div><div class="m" style="left:147px;top:647px;background:#f0eee8"></div><div class="m" style="left:151px;top:647px;background:#dce8f0"></div><div class="m" style="left:155px;top:647px;background:#dce8f0"></div><div class="m" style="left:159px;top:647px;background:#c8c8cc"></div><div class="m" style="left:163px;top:647px;background:#f6f6f6"></div><div class="a" style="left:135px;top:654px;width:36px;height:4px;background:#f2f2f2"></div>
<div class="t " style="top: 638.32px; font-size: 13.5px; line-height: 16px; left: 172px; width: 36px; text-align: center; letter-spacing: 0.77px;">1</div>
<div class="t " style="top: 638.32px; font-size: 13.5px; line-height: 16px; left: 208px; width: 61px; text-align: center; letter-spacing: 0.77px;">3</div>
<div class="t " style="top: 663.32px; font-size: 13.5px; line-height: 16px; left: 18px; width: 30px; text-align: center; letter-spacing: 1.27px;">11</div>
<div class="t strk" style="top: 663.32px; font-size: 13.5px; line-height: 16px; left: 54.5px; letter-spacing: -0.12px;">PLDE-20-123</div>
<div class="m" style="left:139px;top:664px;background:#f2f2f4"></div><div class="m" style="left:143px;top:664px;background:#fafafa"></div><div class="m" style="left:147px;top:664px;background:#ececf0"></div><div class="m" style="left:151px;top:664px;background:#f8f8f6"></div><div class="m" style="left:155px;top:664px;background:#fafafa"></div><div class="m" style="left:159px;top:664px;background:#f8f8f6"></div><div class="m" style="left:163px;top:664px;background:#fafafa"></div><div class="m" style="left:135px;top:668px;background:#aeaab2"></div><div class="m" style="left:139px;top:668px;background:#ccd6e0"></div><div class="m" style="left:143px;top:668px;background:#ccd6e0"></div><div class="m" style="left:147px;top:668px;background:#c4bcbc"></div><div class="m" style="left:151px;top:668px;background:#aeaab2"></div><div class="m" style="left:155px;top:668px;background:#d2d4d0"></div><div class="m" style="left:159px;top:668px;background:#cfcbc8"></div><div class="m" style="left:163px;top:668px;background:#c4bcbc"></div><div class="m" style="left:135px;top:672px;background:#b8b0ae"></div><div class="m" style="left:139px;top:672px;background:#e4e0dc"></div><div class="m" style="left:143px;top:672px;background:#e4e0dc"></div><div class="m" style="left:147px;top:672px;background:#b8b0ae"></div><div class="m" style="left:151px;top:672px;background:#e4e0dc"></div><div class="m" style="left:155px;top:672px;background:#e8e8ee"></div><div class="m" style="left:159px;top:672px;background:#e4e0dc"></div><div class="m" style="left:163px;top:672px;background:#b2b2b2"></div><div class="a" style="left:135px;top:679px;width:36px;height:4px;background:#f2f2f2"></div>
<div class="t " style="top: 663.32px; font-size: 13.5px; line-height: 16px; left: 172px; width: 36px; text-align: center; letter-spacing: 0.77px;">0</div>
<div class="t " style="top: 663.32px; font-size: 13.5px; line-height: 16px; left: 208px; width: 61px; text-align: center; letter-spacing: 0.77px;">0</div>
<div class="t " style="top: 688.32px; font-size: 13.5px; line-height: 16px; left: 18px; width: 30px; text-align: center; letter-spacing: 0.76px;">12</div>
<div class="t strk" style="top: 688.32px; font-size: 13.5px; line-height: 16px; left: 54.5px; letter-spacing: 0.77px;">PL-238-20--</div>
<div class="m" style="left:139px;top:689px;background:#e6e6ea"></div><div class="m" style="left:143px;top:689px;background:#f2f2f4"></div><div class="m" style="left:147px;top:689px;background:#f6f6f6"></div><div class="m" style="left:151px;top:689px;background:#ececf0"></div><div class="m" style="left:155px;top:689px;background:#f6f6f6"></div><div class="m" style="left:159px;top:689px;background:#f2f2f4"></div><div class="m" style="left:163px;top:689px;background:#fafafa"></div><div class="m" style="left:135px;top:693px;background:#d8d2d0"></div><div class="m" style="left:139px;top:693px;background:#ccd6e0"></div><div class="m" style="left:143px;top:693px;background:#ccd6e0"></div><div class="m" style="left:147px;top:693px;background:#cfcbc8"></div><div class="m" style="left:151px;top:693px;background:#c4bcbc"></div><div class="m" style="left:155px;top:693px;background:#d2d4d0"></div><div class="m" style="left:159px;top:693px;background:#d2d4d0"></div><div class="m" style="left:163px;top:693px;background:#ccd6e0"></div><div class="m" style="left:135px;top:697px;background:#e8e8ee"></div><div class="m" style="left:139px;top:697px;background:#dce8f0"></div><div class="m" style="left:143px;top:697px;background:#e8e8ee"></div><div class="m" style="left:147px;top:697px;background:#f0eee8"></div><div class="m" style="left:151px;top:697px;background:#f6f6f6"></div><div class="m" style="left:155px;top:697px;background:#c8c8cc"></div><div class="m" style="left:159px;top:697px;background:#f6f6f6"></div><div class="m" style="left:163px;top:697px;background:#c8c8cc"></div><div class="a" style="left:135px;top:704px;width:36px;height:4px;background:#f2f2f2"></div>
<div class="t " style="top: 688.32px; font-size: 13.5px; line-height: 16px; left: 172px; width: 36px; text-align: center; letter-spacing: -1.02px;">_</div>
<div class="t " style="top: 688.32px; font-size: 13.5px; line-height: 16px; left: 208px; width: 61px; text-align: center; letter-spacing: 0.77px;">0</div>
<div class="t " style="top: 713.32px; font-size: 13.5px; line-height: 16px; left: 18px; width: 30px; text-align: center; letter-spacing: 0.76px;">13</div>
<div class="t strk" style="top: 713.32px; font-size: 13.5px; line-height: 16px; left: 54.5px; letter-spacing: 0.77px;">PL-238-20--</div>
<div class="m" style="left:139px;top:714px;background:#f2f2f4"></div><div class="m" style="left:143px;top:714px;background:#f2f2f4"></div><div class="m" style="left:147px;top:714px;background:#ececf0"></div><div class="m" style="left:151px;top:714px;background:#f8f8f6"></div><div class="m" style="left:155px;top:714px;background:#f6f6f6"></div><div class="m" style="left:159px;top:714px;background:#ececf0"></div><div class="m" style="left:163px;top:714px;background:#fafafa"></div><div class="m" style="left:135px;top:718px;background:#d2d4d0"></div><div class="m" style="left:139px;top:718px;background:#ccd6e0"></div><div class="m" style="left:143px;top:718px;background:#c4bcbc"></div><div class="m" style="left:147px;top:718px;background:#e0e0e0"></div><div class="m" style="left:151px;top:718px;background:#cfcbc8"></div><div class="m" style="left:155px;top:718px;background:#c4bcbc"></div><div class="m" style="left:159px;top:718px;background:#b4b8b8"></div><div class="m" style="left:163px;top:718px;background:#e0e0e0"></div><div class="m" style="left:135px;top:722px;background:#f0eee8"></div><div class="m" style="left:139px;top:722px;background:#dce8f0"></div><div class="m" style="left:143px;top:722px;background:#f0eee8"></div><div class="m" style="left:147px;top:722px;background:#e8e8ee"></div><div class="m" style="left:151px;top:722px;background:#f0eee8"></div><div class="m" style="left:155px;top:722px;background:#e4e0dc"></div><div class="m" style="left:159px;top:722px;background:#e4e0dc"></div><div class="m" style="left:163px;top:722px;background:#dce8f0"></div><div class="a" style="left:135px;top:729px;width:36px;height:4px;background:#f2f2f2"></div>
<div class="t " style="top: 713.32px; font-size: 13.5px; line-height: 16px; left: 172px; width: 36px; text-align: center; letter-spacing: -1.02px;">_</div>
<div class="t " style="top: 713.32px; font-size: 13.5px; line-height: 16px; left: 208px; width: 61px; text-align: center; letter-spacing: 0.77px;">0</div>
<div class="t " style="top: 738.32px; font-size: 13.5px; line-height: 16px; left: 18px; width: 30px; text-align: center; letter-spacing: 0.76px;">14</div>
<div class="t strk" style="top: 738.32px; font-size: 13.5px; line-height: 16px; left: 54.5px; letter-spacing: 0.77px;">PL-238-20--</div>
<div class="m" style="left:139px;top:739px;background:#fafafa"></div><div class="m" style="left:143px;top:739px;background:#ececf0"></div><div class="m" style="left:147px;top:739px;background:#f6f6f6"></div><div class="m" style="left:151px;top:739px;background:#e6e6ea"></div><div class="m" style="left:155px;top:739px;background:#f8f8f6"></div><div class="m" style="left:159px;top:739px;background:#ececf0"></div><div class="m" style="left:163px;top:739px;background:#f6f6f6"></div><div class="m" style="left:135px;top:743px;background:#b4b8b8"></div><div class="m" style="left:139px;top:743px;background:#c4bcbc"></div><div class="m" style="left:143px;top:743px;background:#cfcbc8"></div><div class="m" style="left:147px;top:743px;background:#aeaab2"></div><div class="m" style="left:151px;top:743px;background:#b4b8b8"></div><div class="m" style="left:155px;top:743px;background:#d2d4d0"></div><div class="m" style="left:159px;top:743px;background:#c4bcbc"></div><div class="m" style="left:163px;top:743px;background:#d8d2d0"></div><div class="m" style="left:135px;top:747px;background:#b8b0ae"></div><div class="m" style="left:139px;top:747px;background:#b8b0ae"></div><div class="m" style="left:143px;top:747px;background:#b2b2b2"></div><div class="m" style="left:147px;top:747px;background:#dce8f0"></div><div class="m" style="left:151px;top:747px;background:#dce8f0"></div><div class="m" style="left:155px;top:747px;background:#e4e0dc"></div><div class="m" style="left:159px;top:747px;background:#f6f6f6"></div><div class="m" style="left:163px;top:747px;background:#b8b0ae"></div><div class="a" style="left:135px;top:754px;width:36px;height:4px;background:#f2f2f2"></div>
<div class="t " style="top: 738.32px; font-size: 13.5px; line-height: 16px; left: 172px; width: 36px; text-align: center; letter-spacing: -1.02px;">_</div>
<div class="t " style="top: 738.32px; font-size: 13.5px; line-height: 16px; left: 208px; width: 61px; text-align: center; letter-spacing: 0.77px;">0</div>
<div class="t " style="top: 763.32px; font-size: 13.5px; line-height: 16px; left: 18px; width: 30px; text-align: center; letter-spacing: 0.76px;">15</div>
<div class="t strk" style="top: 763.32px; font-size: 13.5px; line-height: 16px; left: 54.5px; letter-spacing: 0.77px;">PL-238-20--</div>
<div class="m" style="left:139px;top:764px;background:#f8f8f6"></div><div class="m" style="left:143px;top:764px;background:#ececf0"></div><div class="m" style="left:147px;top:764px;background:#f8f8f6"></div><div class="m" style="left:151px;top:764px;background:#f2f2f4"></div><div class="m" style="left:155px;top:764px;background:#e6e6ea"></div><div class="m" style="left:159px;top:764px;background:#f2f2f4"></div><div class="m" style="left:163px;top:764px;background:#ececf0"></div><div class="m" style="left:135px;top:768px;background:#c4bcbc"></div><div class="m" style="left:139px;top:768px;background:#d8d2d0"></div><div class="m" style="left:143px;top:768px;background:#d8d2d0"></div><div class="m" style="left:147px;top:768px;background:#c4bcbc"></div><div class="m" style="left:151px;top:768px;background:#c4bcbc"></div><div class="m" style="left:155px;top:768px;background:#d2d4d0"></div><div class="m" style="left:159px;top:768px;background:#d8d2d0"></div><div class="m" style="left:163px;top:768px;background:#cfcbc8"></div><div class="m" style="left:135px;top:772px;background:#e8e8ee"></div><div class="m" style="left:139px;top:772px;background:#c8c8cc"></div><div class="m" style="left:143px;top:772px;background:#f6f6f6"></div><div class="m" style="left:147px;top:772px;background:#e8e8ee"></div><div class="m" style="left:151px;top:772px;background:#f0eee8"></div><div class="m" style="left:155px;top:772px;background:#f6f6f6"></div><div class="m" style="left:159px;top:772px;background:#dce8f0"></div><div class="m" style="left:163px;top:772px;background:#e8e8ee"></div><div class="a" style="left:135px;top:779px;width:36px;height:4px;background:#f2f2f2"></div>
<div class="t " style="top: 763.32px; font-size: 13.5px; line-height: 16px; left: 172px; width: 36px; text-align: center; letter-spacing: -1.02px;">_</div>
<div class="t " style="top: 763.32px; font-size: 13.5px; line-height: 16px; left: 208px; width: 61px; text-align: center; letter-spacing: 0.77px;">0</div>
<div class="t " style="top: 260.42px; font-size: 13.5px; line-height: 16px; left: 504px; letter-spacing: 1.23px;">Nowy spis gołębi</div>
<div class="a" style="left:627px;top:258px;width:100px;height:20px;border:1px solid #767676;background:#fff"></div>
<div class="t " style="top: 260.42px; font-size: 13.5px; line-height: 16px; left: 632px; letter-spacing: 1.14px;">Dorosłe</div>
<svg class="a" style="left:709px;top:263px" width="12" height="8" viewBox="0 0 12 8"><path d="M2.2 2.2l3.8 3.8l3.8-3.8" fill="none" stroke="#000" stroke-width="2"></path></svg>
<div class="t " style="top: 282.71px; font-size: 9.5px; line-height: 11px; left: 466px; font-style: italic; letter-spacing: 0.93px;">*Program typuje automatycznie pierwsze 50 gołębi do GMP</div>
<div class="btn" style="left:470px;top:297px;width:292px;height:24px"></div>
<div class="t " style="top: 301.82px; font-size: 13.5px; line-height: 16px; left: 470px; width: 292px; text-align: center; letter-spacing: 1.1px;">Usuń wszystkie gołębie z nowego spisu</div>
<div class="hbg" style="left:380px;top:324px;width:472px;height:58px"></div>
<div class="a" style="left:608px;top:670px;width:32px;height:32px;background:#ffb6b6"></div>
<div class="a" style="left:608px;top:702px;width:32px;height:32px;background:#ffb6b6"></div>
<div class="a" style="left:608px;top:734px;width:32px;height:32px;background:#ffb6b6"></div>
<div class="hl" style="left:380px;top:324px;width:1px;height:476px"></div>
<div class="hl" style="left:410px;top:324px;width:1px;height:476px"></div>
<div class="hl" style="left:454px;top:324px;width:1px;height:476px"></div>
<div class="hl" style="left:608px;top:324px;width:1px;height:476px"></div>
<div class="hl" style="left:640px;top:324px;width:1px;height:476px"></div>
<div class="hl" style="left:719px;top:324px;width:1px;height:476px"></div>
<div class="hl" style="left:752px;top:324px;width:1px;height:476px"></div>
<div class="hl" style="left:796px;top:324px;width:1px;height:476px"></div>
<div class="hl" style="left:852px;top:324px;width:1px;height:476px"></div>
<div class="hl" style="left:380px;top:324px;width:473px;height:1px"></div>
<div class="hl" style="left:380px;top:382px;width:473px;height:1px"></div>
<div class="hl" style="left:380px;top:414px;width:473px;height:1px"></div>
<div class="hl" style="left:380px;top:446px;width:473px;height:1px"></div>
<div class="hl" style="left:380px;top:478px;width:473px;height:1px"></div>
<div class="hl" style="left:380px;top:510px;width:473px;height:1px"></div>
<div class="hl" style="left:380px;top:542px;width:473px;height:1px"></div>
<div class="hl" style="left:380px;top:574px;width:473px;height:1px"></div>
<div class="hl" style="left:380px;top:606px;width:473px;height:1px"></div>
<div class="hl" style="left:380px;top:638px;width:473px;height:1px"></div>
<div class="hl" style="left:380px;top:670px;width:473px;height:1px"></div>
<div class="hl" style="left:380px;top:702px;width:473px;height:1px"></div>
<div class="hl" style="left:380px;top:734px;width:473px;height:1px"></div>
<div class="hl" style="left:380px;top:766px;width:473px;height:1px"></div>
<div class="t b" style="top: 363.32px; font-size: 13.5px; line-height: 16px; left: 380px; width: 30px; text-align: center; letter-spacing: -0.06px;">Lp</div>
<div class="t b" style="top: 326.32px; font-size: 13.5px; line-height: 16px; left: 410px; width: 44px; text-align: center; letter-spacing: -0.04px;">Kod</div>
<div class="t b" style="top: 344.32px; font-size: 13.5px; line-height: 16px; left: 410px; width: 44px; text-align: center; letter-spacing: 0.52px;">goł.</div>
<div class="t b" style="top: 367.45px; font-size: 8.5px; line-height: 10px; left: 410px; width: 44px; text-align: center; letter-spacing: 0.51px;">nr komp.</div>
<div class="t b" style="top: 363.32px; font-size: 13.5px; line-height: 16px; left: 454px; width: 154px; text-align: center; letter-spacing: 0.38px;">Obrączka rodowa</div>
<div class="t b" style="top: 363.32px; font-size: 13.5px; line-height: 16px; left: 608px; width: 32px; text-align: center; letter-spacing: 0.24px;">Płeć</div>
<div class="t b" style="top: 363.32px; font-size: 13.5px; line-height: 16px; left: 640px; width: 79px; text-align: center; letter-spacing: 0.43px;">Barwa</div>
<div class="t b" style="top: 363.32px; font-size: 13.5px; line-height: 16px; left: 719px; width: 33px; text-align: center; letter-spacing: 0.02px;">GMP</div>
<div class="t b" style="top: 363.32px; font-size: 13.5px; line-height: 16px; left: 752px; width: 44px; text-align: center; letter-spacing: 0.5px;">Derby</div>
<div class="t b" style="top: 363.32px; font-size: 13.5px; line-height: 16px; left: 796px; width: 56px; text-align: center; letter-spacing: 0.13px;">Usuń</div>
<div class="t " style="top: 391.32px; font-size: 13.5px; line-height: 16px; left: 380px; width: 30px; text-align: center; letter-spacing: 0.77px;">1</div>
<div class="t " style="top: 391.32px; font-size: 13.5px; line-height: 16px; left: 410px; width: 44px; text-align: center; letter-spacing: 0.77px;">001</div>
<div class="t " style="top: 391.32px; font-size: 13.5px; line-height: 16px; left: 475px; letter-spacing: 0.62px;">PL-238-18--4</div>
<div class="m" style="left:562px;top:394px;background:#d2d4d0"></div><div class="m" style="left:566px;top:394px;background:#cfcbc8"></div><div class="m" style="left:570px;top:394px;background:#ccd6e0"></div><div class="m" style="left:574px;top:394px;background:#e0e0e0"></div><div class="m" style="left:578px;top:394px;background:#c4bcbc"></div><div class="m" style="left:582px;top:394px;background:#d8d2d0"></div><div class="m" style="left:562px;top:398px;background:#b8b0ae"></div><div class="m" style="left:566px;top:398px;background:#f6f6f6"></div><div class="m" style="left:570px;top:398px;background:#b2b2b2"></div><div class="m" style="left:574px;top:398px;background:#e8e8ee"></div><div class="m" style="left:578px;top:398px;background:#b2b2b2"></div><div class="m" style="left:582px;top:398px;background:#dce8f0"></div><div class="m" style="left:562px;top:402px;background:#fafafa"></div><div class="m" style="left:566px;top:402px;background:#f8f8f6"></div><div class="m" style="left:570px;top:402px;background:#ececf0"></div><div class="m" style="left:574px;top:402px;background:#f8f8f6"></div><div class="m" style="left:578px;top:402px;background:#ececf0"></div><div class="m" style="left:582px;top:402px;background:#ececf0"></div><div class="a" style="left:562px;top:414px;width:25px;height:4px;background:#f2f2f2"></div>
<div class="sq" style="left:613px;top:387px;width:22px;height:22px;border-radius:4px"></div>
<svg class="a" style="left:613px;top:387px" width="22" height="22" viewBox="0 0 22 22"><ellipse cx="10.5" cy="10.5" rx="3.7" ry="5.5" fill="none" stroke="#000" stroke-width="2.1"></ellipse></svg>
<div class="btn" style="left:657px;top:386px;width:45px;height:24px"></div>
<div class="t " style="top: 391.32px; font-size: 13.5px; line-height: 16px; left: 657px; width: 45px; text-align: center; letter-spacing: 0.71px;">brak</div>
<div class="t " style="top: 391.32px; font-size: 13.5px; line-height: 16px; left: 719px; width: 33px; text-align: center; letter-spacing: -0.44px;">G</div>
<div class="sq" style="left:763px;top:387px;width:22px;height:22px;border-color:#3a3a3a"></div>
<div class="btn" style="left:798px;top:386px;width:52px;height:24px"></div>
<div class="t b" style="top: 391.32px; font-size: 13.5px; line-height: 16px; left: 798px; width: 52px; text-align: center; color: rgb(139, 0, 0); letter-spacing: 0.81px;">Usuń</div>
<div class="t " style="top: 423.32px; font-size: 13.5px; line-height: 16px; left: 380px; width: 30px; text-align: center; letter-spacing: 0.77px;">2</div>
<div class="t " style="top: 423.32px; font-size: 13.5px; line-height: 16px; left: 410px; width: 44px; text-align: center; letter-spacing: 0.77px;">002</div>
<div class="t " style="top: 423.32px; font-size: 13.5px; line-height: 16px; left: 475px; letter-spacing: 0.87px;">PL-238-20---</div>
<div class="m" style="left:562px;top:426px;background:#ccd6e0"></div><div class="m" style="left:566px;top:426px;background:#ccd6e0"></div><div class="m" style="left:570px;top:426px;background:#d8d2d0"></div><div class="m" style="left:574px;top:426px;background:#c4bcbc"></div><div class="m" style="left:578px;top:426px;background:#ccd6e0"></div><div class="m" style="left:582px;top:426px;background:#cfcbc8"></div><div class="m" style="left:562px;top:430px;background:#b2b2b2"></div><div class="m" style="left:566px;top:430px;background:#c8c8cc"></div><div class="m" style="left:570px;top:430px;background:#c8c8cc"></div><div class="m" style="left:574px;top:430px;background:#b8b0ae"></div><div class="m" style="left:578px;top:430px;background:#e4e0dc"></div><div class="m" style="left:582px;top:430px;background:#c8c8cc"></div><div class="m" style="left:562px;top:434px;background:#fafafa"></div><div class="m" style="left:566px;top:434px;background:#f8f8f6"></div><div class="m" style="left:570px;top:434px;background:#f8f8f6"></div><div class="m" style="left:574px;top:434px;background:#f2f2f4"></div><div class="m" style="left:578px;top:434px;background:#f8f8f6"></div><div class="m" style="left:582px;top:434px;background:#e6e6ea"></div><div class="a" style="left:562px;top:446px;width:25px;height:4px;background:#f2f2f2"></div>
<div class="sq" style="left:613px;top:419px;width:22px;height:22px;border-radius:4px"></div>
<svg class="a" style="left:613px;top:419px" width="22" height="22" viewBox="0 0 22 22"><path d="M7.2 7.2L11.6 4.6V16.3M6.8 16.3H15.2" fill="none" stroke="#000" stroke-width="2.1"></path></svg>
<div class="btn" style="left:657px;top:418px;width:45px;height:24px"></div>
<div class="t " style="top: 423.32px; font-size: 13.5px; line-height: 16px; left: 657px; width: 45px; text-align: center; letter-spacing: 0.71px;">brak</div>
<div class="t " style="top: 423.32px; font-size: 13.5px; line-height: 16px; left: 719px; width: 33px; text-align: center; letter-spacing: -0.44px;">G</div>
<div class="sq" style="left:763px;top:419px;width:22px;height:22px;border-color:#3a3a3a"></div>
<div class="btn" style="left:798px;top:418px;width:52px;height:24px"></div>
<div class="t b" style="top: 423.32px; font-size: 13.5px; line-height: 16px; left: 798px; width: 52px; text-align: center; color: rgb(139, 0, 0); letter-spacing: 0.81px;">Usuń</div>
<div class="t " style="top: 455.32px; font-size: 13.5px; line-height: 16px; left: 380px; width: 30px; text-align: center; letter-spacing: 0.77px;">3</div>
<div class="t " style="top: 455.32px; font-size: 13.5px; line-height: 16px; left: 410px; width: 44px; text-align: center; letter-spacing: 0.77px;">003</div>
<div class="t " style="top: 455.32px; font-size: 13.5px; line-height: 16px; left: 475px; letter-spacing: 0.62px;">PL-238-18--4</div>
<div class="m" style="left:562px;top:458px;background:#c4bcbc"></div><div class="m" style="left:566px;top:458px;background:#d2d4d0"></div><div class="m" style="left:570px;top:458px;background:#d8d2d0"></div><div class="m" style="left:574px;top:458px;background:#e0e0e0"></div><div class="m" style="left:578px;top:458px;background:#d2d4d0"></div><div class="m" style="left:582px;top:458px;background:#e0e0e0"></div><div class="m" style="left:562px;top:462px;background:#f6f6f6"></div><div class="m" style="left:566px;top:462px;background:#b8b0ae"></div><div class="m" style="left:570px;top:462px;background:#f0eee8"></div><div class="m" style="left:574px;top:462px;background:#dce8f0"></div><div class="m" style="left:578px;top:462px;background:#f0eee8"></div><div class="m" style="left:582px;top:462px;background:#b2b2b2"></div><div class="m" style="left:562px;top:466px;background:#f6f6f6"></div><div class="m" style="left:566px;top:466px;background:#f8f8f6"></div><div class="m" style="left:570px;top:466px;background:#e6e6ea"></div><div class="m" style="left:574px;top:466px;background:#e6e6ea"></div><div class="m" style="left:578px;top:466px;background:#e6e6ea"></div><div class="m" style="left:582px;top:466px;background:#f2f2f4"></div><div class="a" style="left:562px;top:478px;width:25px;height:4px;background:#f2f2f2"></div>
<div class="sq" style="left:613px;top:451px;width:22px;height:22px;border-radius:4px"></div>
<svg class="a" style="left:613px;top:451px" width="22" height="22" viewBox="0 0 22 22"><path d="M7.2 7.2L11.6 4.6V16.3M6.8 16.3H15.2" fill="none" stroke="#000" stroke-width="2.1"></path></svg>
<div class="btn" style="left:657px;top:450px;width:45px;height:24px"></div>
<div class="t " style="top: 455.32px; font-size: 13.5px; line-height: 16px; left: 657px; width: 45px; text-align: center; letter-spacing: 0.71px;">brak</div>
<div class="t " style="top: 455.32px; font-size: 13.5px; line-height: 16px; left: 719px; width: 33px; text-align: center; letter-spacing: -0.44px;">G</div>
<div class="sq" style="left:763px;top:451px;width:22px;height:22px;border-color:#3a3a3a"></div>
<div class="btn" style="left:798px;top:450px;width:52px;height:24px"></div>
<div class="t b" style="top: 455.32px; font-size: 13.5px; line-height: 16px; left: 798px; width: 52px; text-align: center; color: rgb(139, 0, 0); letter-spacing: 0.81px;">Usuń</div>
<div class="t " style="top: 487.32px; font-size: 13.5px; line-height: 16px; left: 380px; width: 30px; text-align: center; letter-spacing: 0.77px;">4</div>
<div class="t " style="top: 487.32px; font-size: 13.5px; line-height: 16px; left: 410px; width: 44px; text-align: center; letter-spacing: 0.77px;">004</div>
<div class="t " style="top: 487.32px; font-size: 13.5px; line-height: 16px; left: 475px; letter-spacing: 0.87px;">PL-238-20---</div>
<div class="m" style="left:562px;top:490px;background:#c4bcbc"></div><div class="m" style="left:566px;top:490px;background:#ccd6e0"></div><div class="m" style="left:570px;top:490px;background:#ccd6e0"></div><div class="m" style="left:574px;top:490px;background:#b4b8b8"></div><div class="m" style="left:578px;top:490px;background:#aeaab2"></div><div class="m" style="left:582px;top:490px;background:#d2d4d0"></div><div class="m" style="left:562px;top:494px;background:#dce8f0"></div><div class="m" style="left:566px;top:494px;background:#e8e8ee"></div><div class="m" style="left:570px;top:494px;background:#f0eee8"></div><div class="m" style="left:574px;top:494px;background:#e4e0dc"></div><div class="m" style="left:578px;top:494px;background:#b8b0ae"></div><div class="m" style="left:582px;top:494px;background:#f6f6f6"></div><div class="m" style="left:562px;top:498px;background:#f2f2f4"></div><div class="m" style="left:566px;top:498px;background:#fafafa"></div><div class="m" style="left:570px;top:498px;background:#ececf0"></div><div class="m" style="left:574px;top:498px;background:#f6f6f6"></div><div class="m" style="left:578px;top:498px;background:#f6f6f6"></div><div class="m" style="left:582px;top:498px;background:#fafafa"></div><div class="a" style="left:562px;top:510px;width:25px;height:4px;background:#f2f2f2"></div>
<div class="sq" style="left:613px;top:483px;width:22px;height:22px;border-radius:4px"></div>
<svg class="a" style="left:613px;top:483px" width="22" height="22" viewBox="0 0 22 22"><path d="M7.2 7.2L11.6 4.6V16.3M6.8 16.3H15.2" fill="none" stroke="#000" stroke-width="2.1"></path></svg>
<div class="btn" style="left:657px;top:482px;width:45px;height:24px"></div>
<div class="t " style="top: 487.32px; font-size: 13.5px; line-height: 16px; left: 657px; width: 45px; text-align: center; letter-spacing: 0.71px;">brak</div>
<div class="t " style="top: 487.32px; font-size: 13.5px; line-height: 16px; left: 719px; width: 33px; text-align: center; letter-spacing: -0.44px;">G</div>
<div class="sq" style="left:763px;top:483px;width:22px;height:22px;border-color:#3a3a3a"></div>
<div class="btn" style="left:798px;top:482px;width:52px;height:24px"></div>
<div class="t b" style="top: 487.32px; font-size: 13.5px; line-height: 16px; left: 798px; width: 52px; text-align: center; color: rgb(139, 0, 0); letter-spacing: 0.81px;">Usuń</div>
<div class="t " style="top: 519.32px; font-size: 13.5px; line-height: 16px; left: 380px; width: 30px; text-align: center; letter-spacing: 0.77px;">5</div>
<div class="t " style="top: 519.32px; font-size: 13.5px; line-height: 16px; left: 410px; width: 44px; text-align: center; letter-spacing: 0.77px;">005</div>
<div class="t " style="top: 519.32px; font-size: 13.5px; line-height: 16px; left: 475px; letter-spacing: 0.87px;">PL-238-17---</div>
<div class="m" style="left:562px;top:522px;background:#b4b8b8"></div><div class="m" style="left:566px;top:522px;background:#c4bcbc"></div><div class="m" style="left:570px;top:522px;background:#e0e0e0"></div><div class="m" style="left:574px;top:522px;background:#cfcbc8"></div><div class="m" style="left:578px;top:522px;background:#aeaab2"></div><div class="m" style="left:582px;top:522px;background:#aeaab2"></div><div class="m" style="left:562px;top:526px;background:#e4e0dc"></div><div class="m" style="left:566px;top:526px;background:#dce8f0"></div><div class="m" style="left:570px;top:526px;background:#f0eee8"></div><div class="m" style="left:574px;top:526px;background:#dce8f0"></div><div class="m" style="left:578px;top:526px;background:#f0eee8"></div><div class="m" style="left:582px;top:526px;background:#c8c8cc"></div><div class="m" style="left:562px;top:530px;background:#ececf0"></div><div class="m" style="left:566px;top:530px;background:#fafafa"></div><div class="m" style="left:570px;top:530px;background:#ececf0"></div><div class="m" style="left:574px;top:530px;background:#f8f8f6"></div><div class="m" style="left:578px;top:530px;background:#e6e6ea"></div><div class="m" style="left:582px;top:530px;background:#f6f6f6"></div><div class="a" style="left:562px;top:542px;width:25px;height:4px;background:#f2f2f2"></div>
<div class="sq" style="left:613px;top:515px;width:22px;height:22px;border-radius:4px"></div>
<svg class="a" style="left:613px;top:515px" width="22" height="22" viewBox="0 0 22 22"><ellipse cx="10.5" cy="10.5" rx="3.7" ry="5.5" fill="none" stroke="#000" stroke-width="2.1"></ellipse></svg>
<div class="btn" style="left:646px;top:514px;width:67px;height:24px"></div>
<div class="t " style="top: 519.32px; font-size: 13.5px; line-height: 16px; left: 646px; width: 67px; text-align: center; letter-spacing: 0.51px;">niebies.</div>
<div class="t " style="top: 519.32px; font-size: 13.5px; line-height: 16px; left: 719px; width: 33px; text-align: center; letter-spacing: -0.44px;">G</div>
<div class="sq" style="left:763px;top:515px;width:22px;height:22px;border-color:#3a3a3a"></div>
<div class="btn" style="left:798px;top:514px;width:52px;height:24px"></div>
<div class="t b" style="top: 519.32px; font-size: 13.5px; line-height: 16px; left: 798px; width: 52px; text-align: center; color: rgb(139, 0, 0); letter-spacing: 0.81px;">Usuń</div>
<div class="t " style="top: 551.32px; font-size: 13.5px; line-height: 16px; left: 380px; width: 30px; text-align: center; letter-spacing: 0.77px;">6</div>
<div class="t " style="top: 551.32px; font-size: 13.5px; line-height: 16px; left: 410px; width: 44px; text-align: center; letter-spacing: 0.77px;">006</div>
<div class="t " style="top: 551.32px; font-size: 13.5px; line-height: 16px; left: 475px; letter-spacing: 0.87px;">PL-238-17---</div>
<div class="m" style="left:562px;top:554px;background:#d2d4d0"></div><div class="m" style="left:566px;top:554px;background:#d2d4d0"></div><div class="m" style="left:570px;top:554px;background:#b4b8b8"></div><div class="m" style="left:574px;top:554px;background:#c4bcbc"></div><div class="m" style="left:578px;top:554px;background:#c4bcbc"></div><div class="m" style="left:582px;top:554px;background:#c4bcbc"></div><div class="m" style="left:562px;top:558px;background:#b2b2b2"></div><div class="m" style="left:566px;top:558px;background:#e4e0dc"></div><div class="m" style="left:570px;top:558px;background:#e8e8ee"></div><div class="m" style="left:574px;top:558px;background:#b2b2b2"></div><div class="m" style="left:578px;top:558px;background:#e8e8ee"></div><div class="m" style="left:582px;top:558px;background:#e8e8ee"></div><div class="m" style="left:562px;top:562px;background:#fafafa"></div><div class="m" style="left:566px;top:562px;background:#fafafa"></div><div class="m" style="left:570px;top:562px;background:#fafafa"></div><div class="m" style="left:574px;top:562px;background:#f6f6f6"></div><div class="m" style="left:578px;top:562px;background:#fafafa"></div><div class="m" style="left:582px;top:562px;background:#fafafa"></div><div class="a" style="left:562px;top:574px;width:25px;height:4px;background:#f2f2f2"></div>
<div class="sq" style="left:613px;top:547px;width:22px;height:22px;border-radius:4px"></div>
<svg class="a" style="left:613px;top:547px" width="22" height="22" viewBox="0 0 22 22"><path d="M7.2 7.2L11.6 4.6V16.3M6.8 16.3H15.2" fill="none" stroke="#000" stroke-width="2.1"></path></svg>
<div class="btn" style="left:648px;top:546px;width:63px;height:24px"></div>
<div class="t " style="top: 551.32px; font-size: 13.5px; line-height: 16px; left: 648px; width: 63px; text-align: center; letter-spacing: 0.68px;">ciemna</div>
<div class="t " style="top: 551.32px; font-size: 13.5px; line-height: 16px; left: 719px; width: 33px; text-align: center; letter-spacing: -0.44px;">G</div>
<div class="sq" style="left:763px;top:547px;width:22px;height:22px;border-color:#3a3a3a"></div>
<div class="btn" style="left:798px;top:546px;width:52px;height:24px"></div>
<div class="t b" style="top: 551.32px; font-size: 13.5px; line-height: 16px; left: 798px; width: 52px; text-align: center; color: rgb(139, 0, 0); letter-spacing: 0.81px;">Usuń</div>
<div class="t " style="top: 583.32px; font-size: 13.5px; line-height: 16px; left: 380px; width: 30px; text-align: center; letter-spacing: 0.77px;">7</div>
<div class="t " style="top: 583.32px; font-size: 13.5px; line-height: 16px; left: 410px; width: 44px; text-align: center; letter-spacing: 0.77px;">007</div>
<div class="t " style="top: 583.32px; font-size: 13.5px; line-height: 16px; left: 475px; letter-spacing: 0.47px;">PLDE-19-123</div>
<div class="m" style="left:562px;top:586px;background:#b4b8b8"></div><div class="m" style="left:566px;top:586px;background:#d8d2d0"></div><div class="m" style="left:570px;top:586px;background:#cfcbc8"></div><div class="m" style="left:574px;top:586px;background:#d2d4d0"></div><div class="m" style="left:578px;top:586px;background:#d8d2d0"></div><div class="m" style="left:582px;top:586px;background:#d2d4d0"></div><div class="m" style="left:562px;top:590px;background:#b8b0ae"></div><div class="m" style="left:566px;top:590px;background:#b2b2b2"></div><div class="m" style="left:570px;top:590px;background:#e4e0dc"></div><div class="m" style="left:574px;top:590px;background:#b8b0ae"></div><div class="m" style="left:578px;top:590px;background:#f6f6f6"></div><div class="m" style="left:582px;top:590px;background:#f0eee8"></div><div class="m" style="left:562px;top:594px;background:#fafafa"></div><div class="m" style="left:566px;top:594px;background:#f8f8f6"></div><div class="m" style="left:570px;top:594px;background:#ececf0"></div><div class="m" style="left:574px;top:594px;background:#f2f2f4"></div><div class="m" style="left:578px;top:594px;background:#f2f2f4"></div><div class="m" style="left:582px;top:594px;background:#f6f6f6"></div><div class="a" style="left:562px;top:606px;width:25px;height:4px;background:#f2f2f2"></div>
<div class="sq" style="left:613px;top:579px;width:22px;height:22px;border-radius:4px"></div>
<svg class="a" style="left:613px;top:579px" width="22" height="22" viewBox="0 0 22 22"><ellipse cx="10.5" cy="10.5" rx="3.7" ry="5.5" fill="none" stroke="#000" stroke-width="2.1"></ellipse></svg>
<div class="btn" style="left:643px;top:578px;width:73px;height:24px"></div>
<div class="t " style="top: 583.32px; font-size: 13.5px; line-height: 16px; left: 643px; width: 73px; text-align: center; letter-spacing: 0.69px;">c-nakrap</div>
<div class="t " style="top: 583.32px; font-size: 13.5px; line-height: 16px; left: 719px; width: 33px; text-align: center; letter-spacing: -0.44px;">G</div>
<div class="sq" style="left:763px;top:579px;width:22px;height:22px;border-color:#3a3a3a"></div>
<svg class="a" style="left:763px;top:579px" width="22" height="22" viewBox="0 0 22 22"><path d="M4 12l5.6 5.6l8.4-12.8" fill="none" stroke="#333" stroke-width="3"></path></svg>
<div class="btn" style="left:798px;top:578px;width:52px;height:24px"></div>
<div class="t b" style="top: 583.32px; font-size: 13.5px; line-height: 16px; left: 798px; width: 52px; text-align: center; color: rgb(139, 0, 0); letter-spacing: 0.81px;">Usuń</div>
<div class="t " style="top: 615.32px; font-size: 13.5px; line-height: 16px; left: 380px; width: 30px; text-align: center; letter-spacing: 0.77px;">8</div>
<div class="t " style="top: 615.32px; font-size: 13.5px; line-height: 16px; left: 410px; width: 44px; text-align: center; letter-spacing: 0.77px;">008</div>
<div class="t " style="top: 615.32px; font-size: 13.5px; line-height: 16px; left: 475px; letter-spacing: 0.62px;">PL-238-18--4</div>
<div class="m" style="left:562px;top:618px;background:#aeaab2"></div><div class="m" style="left:566px;top:618px;background:#c4bcbc"></div><div class="m" style="left:570px;top:618px;background:#d8d2d0"></div><div class="m" style="left:574px;top:618px;background:#ccd6e0"></div><div class="m" style="left:578px;top:618px;background:#d8d2d0"></div><div class="m" style="left:582px;top:618px;background:#e0e0e0"></div><div class="m" style="left:562px;top:622px;background:#f6f6f6"></div><div class="m" style="left:566px;top:622px;background:#dce8f0"></div><div class="m" style="left:570px;top:622px;background:#b2b2b2"></div><div class="m" style="left:574px;top:622px;background:#e4e0dc"></div><div class="m" style="left:578px;top:622px;background:#b2b2b2"></div><div class="m" style="left:582px;top:622px;background:#f0eee8"></div><div class="m" style="left:562px;top:626px;background:#fafafa"></div><div class="m" style="left:566px;top:626px;background:#fafafa"></div><div class="m" style="left:570px;top:626px;background:#fafafa"></div><div class="m" style="left:574px;top:626px;background:#f2f2f4"></div><div class="m" style="left:578px;top:626px;background:#ececf0"></div><div class="m" style="left:582px;top:626px;background:#f6f6f6"></div><div class="a" style="left:562px;top:638px;width:25px;height:4px;background:#f2f2f2"></div>
<div class="sq" style="left:613px;top:611px;width:22px;height:22px;border-radius:4px"></div>
<svg class="a" style="left:613px;top:611px" width="22" height="22" viewBox="0 0 22 22"><path d="M7.2 7.2L11.6 4.6V16.3M6.8 16.3H15.2" fill="none" stroke="#000" stroke-width="2.1"></path></svg>
<div class="btn" style="left:657px;top:610px;width:45px;height:24px"></div>
<div class="t " style="top: 615.32px; font-size: 13.5px; line-height: 16px; left: 657px; width: 45px; text-align: center; letter-spacing: 0.71px;">brak</div>
<div class="t " style="top: 615.32px; font-size: 13.5px; line-height: 16px; left: 719px; width: 33px; text-align: center; letter-spacing: -0.44px;">G</div>
<div class="sq" style="left:763px;top:611px;width:22px;height:22px;border-color:#3a3a3a"></div>
<div class="btn" style="left:798px;top:610px;width:52px;height:24px"></div>
<div class="t b" style="top: 615.32px; font-size: 13.5px; line-height: 16px; left: 798px; width: 52px; text-align: center; color: rgb(139, 0, 0); letter-spacing: 0.81px;">Usuń</div>
<div class="t " style="top: 647.32px; font-size: 13.5px; line-height: 16px; left: 380px; width: 30px; text-align: center; letter-spacing: 0.77px;">9</div>
<div class="t " style="top: 647.32px; font-size: 13.5px; line-height: 16px; left: 410px; width: 44px; text-align: center; letter-spacing: 0.77px;">009</div>
<div class="t " style="top: 647.32px; font-size: 13.5px; line-height: 16px; left: 475px; letter-spacing: 0.87px;">PL-238-17---</div>
<div class="m" style="left:562px;top:650px;background:#e0e0e0"></div><div class="m" style="left:566px;top:650px;background:#b4b8b8"></div><div class="m" style="left:570px;top:650px;background:#ccd6e0"></div><div class="m" style="left:574px;top:650px;background:#d8d2d0"></div><div class="m" style="left:578px;top:650px;background:#d8d2d0"></div><div class="m" style="left:582px;top:650px;background:#aeaab2"></div><div class="m" style="left:562px;top:654px;background:#b8b0ae"></div><div class="m" style="left:566px;top:654px;background:#dce8f0"></div><div class="m" style="left:570px;top:654px;background:#b8b0ae"></div><div class="m" style="left:574px;top:654px;background:#e8e8ee"></div><div class="m" style="left:578px;top:654px;background:#b8b0ae"></div><div class="m" style="left:582px;top:654px;background:#e4e0dc"></div><div class="m" style="left:562px;top:658px;background:#f8f8f6"></div><div class="m" style="left:566px;top:658px;background:#f2f2f4"></div><div class="m" style="left:570px;top:658px;background:#f6f6f6"></div><div class="m" style="left:574px;top:658px;background:#ececf0"></div><div class="m" style="left:578px;top:658px;background:#ececf0"></div><div class="m" style="left:582px;top:658px;background:#f6f6f6"></div><div class="a" style="left:562px;top:670px;width:25px;height:4px;background:#f2f2f2"></div>
<div class="sq" style="left:613px;top:643px;width:22px;height:22px;border-radius:4px"></div>
<svg class="a" style="left:613px;top:643px" width="22" height="22" viewBox="0 0 22 22"><path d="M7.2 7.2L11.6 4.6V16.3M6.8 16.3H15.2" fill="none" stroke="#000" stroke-width="2.1"></path></svg>
<div class="btn" style="left:642px;top:642px;width:74px;height:24px"></div>
<div class="t " style="top: 647.32px; font-size: 13.5px; line-height: 16px; left: 642px; width: 74px; text-align: center; letter-spacing: 0.73px;">n-nakrap</div>
<div class="t " style="top: 647.32px; font-size: 13.5px; line-height: 16px; left: 719px; width: 33px; text-align: center; letter-spacing: -0.44px;">G</div>
<div class="sq" style="left:763px;top:643px;width:22px;height:22px;border-color:#3a3a3a"></div>
<div class="btn" style="left:798px;top:642px;width:52px;height:24px"></div>
<div class="t b" style="top: 647.32px; font-size: 13.5px; line-height: 16px; left: 798px; width: 52px; text-align: center; color: rgb(139, 0, 0); letter-spacing: 0.81px;">Usuń</div>
<div class="t " style="top: 679.32px; font-size: 13.5px; line-height: 16px; left: 380px; width: 30px; text-align: center; letter-spacing: 0.76px;">10</div>
<div class="t " style="top: 679.32px; font-size: 13.5px; line-height: 16px; left: 410px; width: 44px; text-align: center; letter-spacing: 0.77px;">010</div>
<div class="t " style="top: 679.32px; font-size: 13.5px; line-height: 16px; left: 475px; letter-spacing: 0.87px;">PL-238-20---</div>
<div class="m" style="left:562px;top:682px;background:#c4bcbc"></div><div class="m" style="left:566px;top:682px;background:#b4b8b8"></div><div class="m" style="left:570px;top:682px;background:#d2d4d0"></div><div class="m" style="left:574px;top:682px;background:#ccd6e0"></div><div class="m" style="left:578px;top:682px;background:#aeaab2"></div><div class="m" style="left:582px;top:682px;background:#aeaab2"></div><div class="m" style="left:562px;top:686px;background:#b8b0ae"></div><div class="m" style="left:566px;top:686px;background:#e4e0dc"></div><div class="m" style="left:570px;top:686px;background:#b2b2b2"></div><div class="m" style="left:574px;top:686px;background:#f0eee8"></div><div class="m" style="left:578px;top:686px;background:#f6f6f6"></div><div class="m" style="left:582px;top:686px;background:#e8e8ee"></div><div class="m" style="left:562px;top:690px;background:#f6f6f6"></div><div class="m" style="left:566px;top:690px;background:#ececf0"></div><div class="m" style="left:570px;top:690px;background:#ececf0"></div><div class="m" style="left:574px;top:690px;background:#e6e6ea"></div><div class="m" style="left:578px;top:690px;background:#f8f8f6"></div><div class="m" style="left:582px;top:690px;background:#f8f8f6"></div><div class="a" style="left:562px;top:702px;width:25px;height:4px;background:#f2f2f2"></div>
<div class="sq" style="left:613px;top:675px;width:22px;height:22px;border-radius:4px"></div>
<div class="a" style="left:618px;top:684px;width:12px;height:3px;background:#111"></div>
<div class="btn" style="left:657px;top:674px;width:45px;height:24px"></div>
<div class="t " style="top: 679.32px; font-size: 13.5px; line-height: 16px; left: 657px; width: 45px; text-align: center; letter-spacing: 0.71px;">brak</div>
<div class="t " style="top: 679.32px; font-size: 13.5px; line-height: 16px; left: 719px; width: 33px; text-align: center; letter-spacing: -0.44px;">G</div>
<div class="sq" style="left:763px;top:675px;width:22px;height:22px;border-color:#3a3a3a"></div>
<div class="btn" style="left:798px;top:674px;width:52px;height:24px"></div>
<div class="t b" style="top: 679.32px; font-size: 13.5px; line-height: 16px; left: 798px; width: 52px; text-align: center; color: rgb(139, 0, 0); letter-spacing: 0.81px;">Usuń</div>
<div class="t " style="top: 711.32px; font-size: 13.5px; line-height: 16px; left: 380px; width: 30px; text-align: center; letter-spacing: 1.27px;">11</div>
<div class="t " style="top: 711.32px; font-size: 13.5px; line-height: 16px; left: 410px; width: 44px; text-align: center; letter-spacing: 1.1px;">011</div>
<div class="t " style="top: 711.32px; font-size: 13.5px; line-height: 16px; left: 475px; letter-spacing: 0.87px;">PL-238-20---</div>
<div class="m" style="left:562px;top:714px;background:#c4bcbc"></div><div class="m" style="left:566px;top:714px;background:#aeaab2"></div><div class="m" style="left:570px;top:714px;background:#cfcbc8"></div><div class="m" style="left:574px;top:714px;background:#cfcbc8"></div><div class="m" style="left:578px;top:714px;background:#d8d2d0"></div><div class="m" style="left:582px;top:714px;background:#b4b8b8"></div><div class="m" style="left:562px;top:718px;background:#b8b0ae"></div><div class="m" style="left:566px;top:718px;background:#b2b2b2"></div><div class="m" style="left:570px;top:718px;background:#e8e8ee"></div><div class="m" style="left:574px;top:718px;background:#e8e8ee"></div><div class="m" style="left:578px;top:718px;background:#b8b0ae"></div><div class="m" style="left:582px;top:718px;background:#b2b2b2"></div><div class="m" style="left:562px;top:722px;background:#e6e6ea"></div><div class="m" style="left:566px;top:722px;background:#fafafa"></div><div class="m" style="left:570px;top:722px;background:#ececf0"></div><div class="m" style="left:574px;top:722px;background:#fafafa"></div><div class="m" style="left:578px;top:722px;background:#f6f6f6"></div><div class="m" style="left:582px;top:722px;background:#f2f2f4"></div><div class="a" style="left:562px;top:734px;width:25px;height:4px;background:#f2f2f2"></div>
<div class="sq" style="left:613px;top:707px;width:22px;height:22px;border-radius:4px"></div>
<div class="a" style="left:618px;top:716px;width:12px;height:3px;background:#111"></div>
<div class="btn" style="left:657px;top:706px;width:45px;height:24px"></div>
<div class="t " style="top: 711.32px; font-size: 13.5px; line-height: 16px; left: 657px; width: 45px; text-align: center; letter-spacing: 0.71px;">brak</div>
<div class="t " style="top: 711.32px; font-size: 13.5px; line-height: 16px; left: 719px; width: 33px; text-align: center; letter-spacing: -0.44px;">G</div>
<div class="sq" style="left:763px;top:707px;width:22px;height:22px;border-color:#3a3a3a"></div>
<div class="btn" style="left:798px;top:706px;width:52px;height:24px"></div>
<div class="t b" style="top: 711.32px; font-size: 13.5px; line-height: 16px; left: 798px; width: 52px; text-align: center; color: rgb(139, 0, 0); letter-spacing: 0.81px;">Usuń</div>
<div class="t " style="top: 743.32px; font-size: 13.5px; line-height: 16px; left: 380px; width: 30px; text-align: center; letter-spacing: 0.76px;">12</div>
<div class="t " style="top: 743.32px; font-size: 13.5px; line-height: 16px; left: 410px; width: 44px; text-align: center; letter-spacing: 0.77px;">012</div>
<div class="t " style="top: 743.32px; font-size: 13.5px; line-height: 16px; left: 475px; letter-spacing: 0.87px;">PL-238-20---</div>
<div class="m" style="left:562px;top:746px;background:#cfcbc8"></div><div class="m" style="left:566px;top:746px;background:#ccd6e0"></div><div class="m" style="left:570px;top:746px;background:#d8d2d0"></div><div class="m" style="left:574px;top:746px;background:#e0e0e0"></div><div class="m" style="left:578px;top:746px;background:#aeaab2"></div><div class="m" style="left:582px;top:746px;background:#e0e0e0"></div><div class="m" style="left:562px;top:750px;background:#e4e0dc"></div><div class="m" style="left:566px;top:750px;background:#c8c8cc"></div><div class="m" style="left:570px;top:750px;background:#c8c8cc"></div><div class="m" style="left:574px;top:750px;background:#e8e8ee"></div><div class="m" style="left:578px;top:750px;background:#e4e0dc"></div><div class="m" style="left:582px;top:750px;background:#b8b0ae"></div><div class="m" style="left:562px;top:754px;background:#f8f8f6"></div><div class="m" style="left:566px;top:754px;background:#fafafa"></div><div class="m" style="left:570px;top:754px;background:#f8f8f6"></div><div class="m" style="left:574px;top:754px;background:#f6f6f6"></div><div class="m" style="left:578px;top:754px;background:#e6e6ea"></div><div class="m" style="left:582px;top:754px;background:#f8f8f6"></div><div class="a" style="left:562px;top:766px;width:25px;height:4px;background:#f2f2f2"></div>
<div class="sq" style="left:613px;top:739px;width:22px;height:22px;border-radius:4px"></div>
<div class="a" style="left:618px;top:748px;width:12px;height:3px;background:#111"></div>
<div class="btn" style="left:657px;top:738px;width:45px;height:24px"></div>
<div class="t " style="top: 743.32px; font-size: 13.5px; line-height: 16px; left: 657px; width: 45px; text-align: center; letter-spacing: 0.71px;">brak</div>
<div class="t " style="top: 743.32px; font-size: 13.5px; line-height: 16px; left: 719px; width: 33px; text-align: center; letter-spacing: -0.44px;">G</div>
<div class="sq" style="left:763px;top:739px;width:22px;height:22px;border-color:#3a3a3a"></div>
<div class="btn" style="left:798px;top:738px;width:52px;height:24px"></div>
<div class="t b" style="top: 743.32px; font-size: 13.5px; line-height: 16px; left: 798px; width: 52px; text-align: center; color: rgb(139, 0, 0); letter-spacing: 0.81px;">Usuń</div>
</body></html>
